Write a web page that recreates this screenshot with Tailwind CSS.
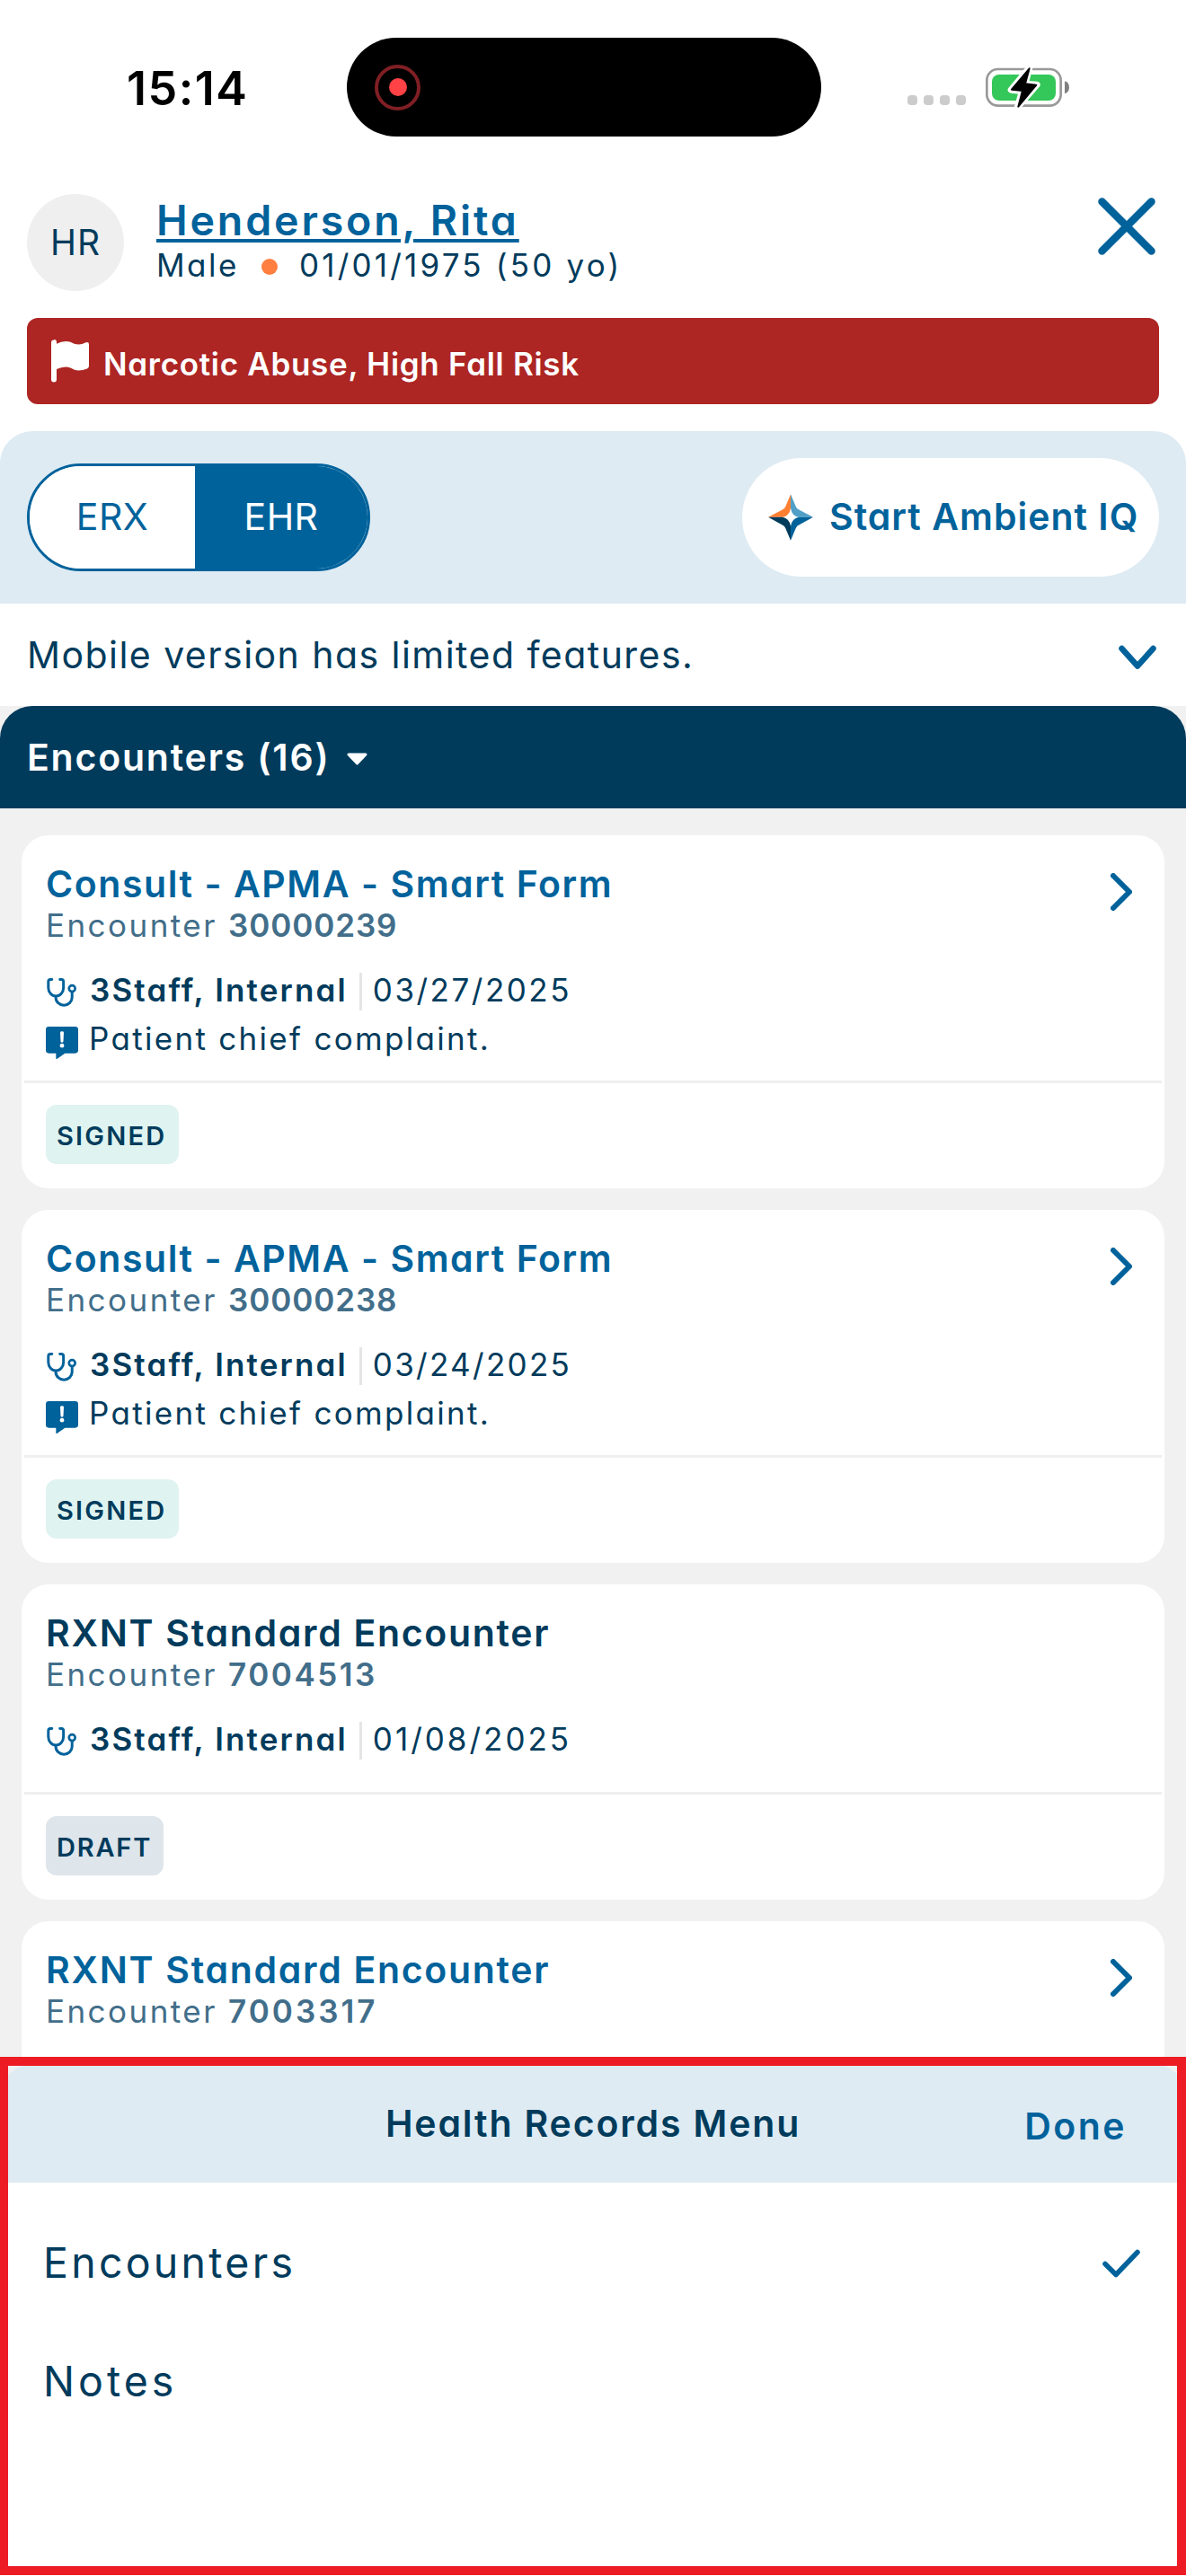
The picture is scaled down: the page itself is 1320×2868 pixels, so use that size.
<!DOCTYPE html>
<html lang="en">
<head>
<meta charset="utf-8">
<title>Health Records</title>
<script src="https://cdn.jsdelivr.net/npm/@tailwindcss/browser@4"></script>
</head>
<body class="bg-white">
<svg class="hidden">
  <symbol id="stethoscope" viewBox="36 36 105 100">
    <g fill="none" stroke="#00629B" stroke-width="9" stroke-linecap="round" stroke-linejoin="round">
      <path d="M56 43.500h-5q-7 0-7 8v20a25.500 28 0 0 0 51 0v-20q0-8-7-8h-5"/>
      <path d="M69 101v3a27.500 26.500 0 0 0 55 0v-18"/>
      <circle cx="124" cy="74" r="10.500" stroke-width="8"/>
    </g>
  </symbol>
  <symbol id="complaint" viewBox="33 204 108 108">
    <path fill="#00629B" d="M43 204h88q10 0 10 10v69q0 10-10 10h-34l-27 19q-3 1-3-2v-17h-24q-10 0-10-10v-69q0-10 10-10z"/>
    <path fill="#fff" d="M81 224q0-4 6-4t6 4l-1.500 29q-.5 4-4.500 4t-4.500-4z"/>
    <circle cx="87" cy="267.500" r="7" fill="#fff"/>
  </symbol>
  <symbol id="chevron" viewBox="0 0 24 42">
    <path d="M3 3l18 18l-18 18" fill="none" stroke="#00629B" stroke-width="6" stroke-linecap="round" stroke-linejoin="round"/>
  </symbol>
</svg>

<div class="w-[1320px] h-[2868px] overflow-hidden bg-white font-['Inter',sans-serif] [font-feature-settings:'cv11'] text-[#003B5C]">
  <div class="h-[2290px] overflow-hidden bg-[#F1F1F1]">
    <div class="bg-white">
      <!-- Status bar -->
      <div class="h-[194px] flex items-center pl-[141px]">
        <div class="w-[245px] shrink-0 text-[52px] leading-none font-semibold tracking-[1.500px] text-black pt-[3px]">15:14</div>
        <div class="w-[528px] h-[110px] shrink-0 rounded-full bg-black flex items-center pl-[31px]">
          <div class="size-[51px] rounded-full border-4 border-[#7F1F24] flex items-center justify-center">
            <div class="size-5 rounded-full bg-[#FF4245]"></div>
          </div>
        </div>
        <div class="flex gap-[7px] ml-24 mt-[29px]">
          <div class="size-[11px] rounded-[4px] bg-[#CCCCCC]"></div>
          <div class="size-[11px] rounded-[4px] bg-[#CCCCCC]"></div>
          <div class="size-[11px] rounded-[4px] bg-[#CCCCCC]"></div>
          <div class="size-[11px] rounded-[4px] bg-[#CCCCCC]"></div>
        </div>
        <svg class="w-[95px] h-[47px] ml-[21px] shrink-0" viewBox="33 39 285 141">
          <rect x="40" y="48" width="247" height="122" rx="37" fill="none" stroke="#999" stroke-width="8"/>
          <path d="M300 88q15 5 15 21t-15 21z" fill="#808080"/>
          <rect x="57" y="66" width="213" height="87" rx="24" fill="#34C759"/>
          <path d="M182 44L121 117L158 121L143 174L207 100L168 97Z" fill="#000" stroke="#fff" stroke-width="22" stroke-linejoin="round"/>
          <path d="M182 46L123 116L159 120L145 173L205 101L168 97Z" fill="#000" stroke="#000" stroke-width="6" stroke-linejoin="round"/>
        </svg>
      </div>

      <!-- Patient -->
      <div class="flex pl-[30px] pr-[34px] pt-[22px]">
        <div class="size-[108px] rounded-full bg-[#EFEFEF] flex items-center justify-center text-[39px] tracking-[1px]">HR</div>
        <div class="ml-9 pt-1">
          <div class="text-[46.500px] leading-[50px] font-semibold tracking-[2.850px] text-[#00629B] underline decoration-[4px] underline-offset-[4px] whitespace-nowrap">Henderson, Rita</div>
          <div class="flex items-center text-[35px] leading-[50px] whitespace-nowrap">
            <span class="tracking-[2.500px]">Male</span>
            <span class="size-[18px] rounded-full bg-[#FF7F41] ml-[25px] mr-[24px] mt-1"></span>
            <span class="tracking-[3.200px]">01/01/1975 (50 yo)</span>
          </div>
        </div>
        <svg class="w-[64px] h-[64px] ml-auto mt-1" viewBox="0 0 64 64"><path d="M4.500 4.500L59.500 59.500M59.500 4.500L4.500 59.500" stroke="#00629B" stroke-width="8.500" stroke-linecap="round"/></svg>
      </div>

      <!-- Alert -->
      <div class="mx-[30px] mt-[30px] h-24 rounded-xl bg-[#AD2624] flex items-center pl-[27px] text-white">
        <svg class="w-[42px] h-[48px]" viewBox="0 0 42 48"><path fill="#fff" d="M3 0q3 0 3 3v1.700q5-2.700 10.500-2.700c6 0 8 3.500 14 3.500q4 0 7.500-2q4-1.500 4 2v24q0 2-2 3q-5 2-9.500 2c-6 0-8-4-14-4q-5.500 0-10.500 2.500v11.500q0 3-3 3t-3-3v-41q0-3 3-3z"/></svg>
        <div class="ml-[16px] pt-[7px] text-[35px] font-semibold tracking-[0.700px]">Narcotic Abuse, High Fall Risk</div>
      </div>

      <!-- Mode switch -->
      <div class="mt-[30px] h-48 rounded-t-[36px] bg-[#DEEBF3] flex items-center justify-between px-[30px] text-[41px]">
        <div class="w-[382px] h-[120px] rounded-full border-[3px] border-[#00629B] overflow-hidden flex">
          <div class="w-[184px] bg-white text-[#00629B] flex items-center justify-center tracking-[0.500px]">ERX</div>
          <div class="flex-1 bg-[#00629B] text-white flex items-center justify-center tracking-[0.500px]">EHR</div>
        </div>
        <div class="w-[464px] h-[132px] rounded-full bg-white flex items-center pl-[29px]">
          <svg class="w-[50px] h-[52px]" viewBox="45 45 150 155">
            <path fill="#FF7F32" d="M120 45L103 86Q100 95 91 98L45 122H93Q116 118 120 92Z"/>
            <path fill="#4F9FC6" d="M120 45L137 86Q140 95 149 98L195 122H147Q124 118 120 92Z"/>
            <path fill="#003B5C" d="M120 200L103 159Q100 150 91 147L45 122H93Q116 127 120 152Z"/>
            <path fill="#00629B" d="M120 200L137 159Q140 150 149 147L195 122H147Q124 127 120 152Z"/>
          </svg>
          <div class="ml-[18px] text-[#00629B] font-semibold tracking-[1px] whitespace-nowrap">Start Ambient IQ</div>
        </div>
      </div>

      <!-- Notice -->
      <div class="h-[114px] flex items-center justify-between pl-[30px] pr-[33px]">
        <div class="pt-[2px] text-[41px] tracking-[1.450px]">Mobile version has limited features.</div>
        <svg class="w-[42px] h-[30px] mt-[5px]" viewBox="0 0 42 30"><path d="M3.500 5l17.500 19.500l17.500-19.500" fill="none" stroke="#00629B" stroke-width="6.500" stroke-linecap="round" stroke-linejoin="round"/></svg>
      </div>
    </div>

    <!-- Section header -->
    <div class="h-[114px] rounded-t-[36px] bg-[#003B5C] flex items-center pl-[30px] text-white">
      <div class="pt-[2px] text-[41px] font-semibold tracking-[1.800px]">Encounters (16)</div>
      <svg class="w-[23px] h-[14px] ml-[18px] mt-1" viewBox="0 0 23 14"><path d="M2 2h19l-9.500 10z" fill="#fff" stroke="#fff" stroke-width="3" stroke-linejoin="round"/></svg>
    </div>

    <!-- Encounter cards -->
    <div class="px-6 pt-[30px] flex flex-col gap-6">
      <div class="h-[393px] rounded-[30px] bg-white pt-7 px-[3px] overflow-hidden">
        <div class="px-6 flex justify-between">
          <div>
            <div class="text-[41px] leading-[52px] font-semibold tracking-[1.550px] text-[#00629B]">Consult - APMA - Smart Form</div>
            <div class="text-[35px] leading-[41px] tracking-[2.450px] text-[#426E8A]">Encounter <b class="font-semibold tracking-[0.900px]">30000239</b></div>
          </div>
          <svg class="w-6 h-[42px] mr-[9px] mt-[14px]"><use href="#chevron"/></svg>
        </div>
        <div class="px-6 mt-8 h-[42px] flex items-center text-[35px]">
          <svg class="w-[35px] h-[33px]"><use href="#stethoscope"/></svg>
          <div class="ml-[14px] pb-[3px] font-semibold tracking-[2.150px]">3Staff, Internal</div>
          <div class="w-[3px] h-[42px] ml-[13px] bg-[#E5E5E5]"></div>
          <div class="ml-3 pb-[3px] tracking-[2.500px]">03/27/2025</div>
        </div>
        <div class="px-6 mt-[10px] h-[42px] flex items-center text-[35px]">
          <svg class="size-9 mt-[10px]"><use href="#complaint"/></svg>
          <div class="ml-[12px] tracking-[2.300px]">Patient chief complaint.</div>
        </div>
        <div class="mt-[26px] h-[3px] bg-[#EFEFEF]"></div>
        <div class="mt-6 ml-6 w-[148px] h-[66px] rounded-xl bg-[#DFF3F0] flex items-center pl-3 pt-1 text-[29px] font-semibold tracking-[2.200px]">SIGNED</div>
      </div>

      <div class="h-[393px] rounded-[30px] bg-white pt-7 px-[3px] overflow-hidden">
        <div class="px-6 flex justify-between">
          <div>
            <div class="text-[41px] leading-[52px] font-semibold tracking-[1.550px] text-[#00629B]">Consult - APMA - Smart Form</div>
            <div class="text-[35px] leading-[41px] tracking-[2.450px] text-[#426E8A]">Encounter <b class="font-semibold tracking-[0.900px]">30000238</b></div>
          </div>
          <svg class="w-6 h-[42px] mr-[9px] mt-[14px]"><use href="#chevron"/></svg>
        </div>
        <div class="px-6 mt-8 h-[42px] flex items-center text-[35px]">
          <svg class="w-[35px] h-[33px]"><use href="#stethoscope"/></svg>
          <div class="ml-[14px] pb-[3px] font-semibold tracking-[2.150px]">3Staff, Internal</div>
          <div class="w-[3px] h-[42px] ml-[13px] bg-[#E5E5E5]"></div>
          <div class="ml-3 pb-[3px] tracking-[2.300px]">03/24/2025</div>
        </div>
        <div class="px-6 mt-[10px] h-[42px] flex items-center text-[35px]">
          <svg class="size-9 mt-[10px]"><use href="#complaint"/></svg>
          <div class="ml-[12px] tracking-[2.300px]">Patient chief complaint.</div>
        </div>
        <div class="mt-[26px] h-[3px] bg-[#EFEFEF]"></div>
        <div class="mt-6 ml-6 w-[148px] h-[66px] rounded-xl bg-[#DFF3F0] flex items-center pl-3 pt-1 text-[29px] font-semibold tracking-[2.200px]">SIGNED</div>
      </div>

      <div class="h-[351px] rounded-[30px] bg-white pt-7 px-[3px] overflow-hidden">
        <div class="px-6">
          <div class="text-[41px] leading-[52px] font-semibold tracking-[1.700px]">RXNT Standard Encounter</div>
          <div class="text-[35px] leading-[41px] tracking-[2.450px] text-[#426E8A]">Encounter <b class="font-semibold tracking-[2.500px]">7004513</b></div>
        </div>
        <div class="px-6 mt-8 h-[42px] flex items-center text-[35px]">
          <svg class="w-[35px] h-[33px]"><use href="#stethoscope"/></svg>
          <div class="ml-[14px] pb-[3px] font-semibold tracking-[2.150px]">3Staff, Internal</div>
          <div class="w-[3px] h-[42px] ml-[13px] bg-[#E5E5E5]"></div>
          <div class="ml-3 pb-[3px] tracking-[3px]">01/08/2025</div>
        </div>
        <div class="mt-9 h-[3px] bg-[#EFEFEF]"></div>
        <div class="mt-6 ml-6 w-[131px] h-[66px] rounded-xl bg-[#DEE5EB] flex items-center pl-3 pt-1 text-[29px] font-semibold tracking-[1.800px]">DRAFT</div>
      </div>

      <div class="h-[351px] rounded-[30px] bg-white pt-7 px-[3px] overflow-hidden">
        <div class="px-6 flex justify-between">
          <div>
            <div class="text-[41px] leading-[52px] font-semibold tracking-[1.700px] text-[#00629B]">RXNT Standard Encounter</div>
            <div class="text-[35px] leading-[41px] tracking-[2.450px] text-[#426E8A]">Encounter <b class="font-semibold tracking-[3px]">7003317</b></div>
          </div>
          <svg class="w-6 h-[42px] mr-[9px] mt-[14px]"><use href="#chevron"/></svg>
        </div>
      </div>
    </div>
  </div>

  <!-- Bottom sheet -->
  <div class="h-[577px] overflow-hidden border-[#ED1C24] border-t-[10px] border-b-[10px] border-l-[9px] border-r-[10px] bg-[#F1F1F1]">
    <div class="-ml-[9px] -mr-[10px] -mt-[2px] h-[570px] rounded-t-[36px] overflow-hidden bg-white">
      <div class="h-[132px] bg-[#DEEBF3] grid grid-cols-[1fr_auto_1fr] items-center text-[41px] font-semibold">
        <div></div>
        <div class="pt-[1px] tracking-[1.850px]">Health Records Menu</div>
        <div class="justify-self-end pr-[66px] pt-[7px] tracking-[2.450px] text-[#00629B]">Done</div>
      </div>
      <div class="pt-[23px] pl-12 pr-[51px] text-[46.500px]">
        <div class="h-[132px] flex items-center justify-between">
          <span class="pt-[2px] tracking-[3.250px]">Encounters</span>
          <svg class="w-[42px] h-[32px] mt-[2px]" viewBox="0 0 42 32"><path d="M3 16.500l12 12l24-25" fill="none" stroke="#00629B" stroke-width="5.500" stroke-linecap="round" stroke-linejoin="round"/></svg>
        </div>
        <div class="h-[132px] flex items-center pt-[2px] tracking-[4px]">Notes</div>
      </div>
    </div>
  </div>
</div>
</body>
</html>
